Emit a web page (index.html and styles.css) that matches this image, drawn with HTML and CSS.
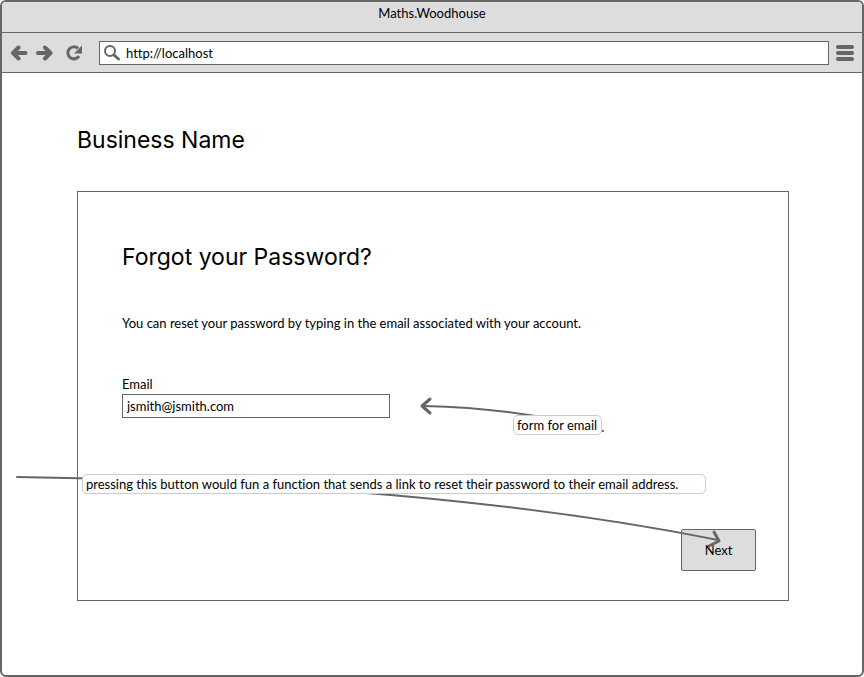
FILE: index.html
```html
<!DOCTYPE html>
<html lang="en">
<head>
<meta charset="utf-8">
<title>Maths.Woodhouse</title>
<link rel="stylesheet" href="styles.css">
</head>
<body>
<div class="window">
  <header class="titlebar">Maths.Woodhouse</header>
  <nav class="toolbar">
    <button class="tool" type="button" aria-label="Back">
      <svg width="18" height="16" viewBox="0 0 18 16"><path class="thick" d="M15.500 8H4M8.500 2.500L3 8l5.500 5.500"/></svg>
    </button>
    <button class="tool" type="button" aria-label="Forward">
      <svg width="18" height="16" viewBox="0 0 18 16"><path class="thick" d="M3 8H15M10 2.500L15.500 8l-5.500 5.500"/></svg>
    </button>
    <button class="tool tool-reload" type="button" aria-label="Reload">
      <svg width="18" height="16" viewBox="0 0 18 16"><path class="ring" d="M13 3.500A6 6 0 1 0 14 11"/><path class="solid" d="M17 .5v8H9z"/></svg>
    </button>
    <label class="address">
      <svg width="18" height="18" viewBox="0 0 18 18" aria-hidden="true"><circle class="lens" cx="6" cy="7" r="5"/><path class="handle" d="M10 11l4.500 4"/></svg>
      <input class="address-input" type="text" value="http://localhost" aria-label="Address">
    </label>
    <button class="tool" type="button" aria-label="Menu">
      <svg width="18" height="16" viewBox="0 0 18 16"><path class="bars" d="M2 2h14M2 8h14M2 14h14"/></svg>
    </button>
  </nav>
  <main class="page">
    <h1 class="brand">Business Name</h1>
    <form class="card">
      <h2 class="heading">Forgot your Password?</h2>
      <p class="intro">You can reset your password by typing in the email associated with your account.</p>
      <label class="label" for="email">Email</label>
      <input class="email" id="email" type="text" value="jsmith@jsmith.com">
      <button class="next" type="button">Next</button>
    </form>
  </main>
  <svg class="arrows" width="800" height="600" viewBox="0 0 800 600" aria-hidden="true">
    <path class="line" d="M603 431Q520 408 424 406"/>
    <path class="head" d="M430 399l-8 7 8 7"/>
    <path class="line" d="M17 477Q432 483 718 540"/>
    <path class="head" d="M714 532l5 9-10 5"/>
  </svg>
  <p class="note note-form">form for email</p>
  <p class="note note-button">pressing this button would fun a function that sends a link to reset their password to their email address.</p>
</div>
</body>
</html>
```
FILE: styles.css
```css
* { box-sizing: border-box; }

body {
  margin: 0;
  background: #fff;
  color: #000;
  font: 13px/20px Lato, sans-serif;
  font-variant-ligatures: none;
}

h1, h2, p { margin: 0; font-weight: 400; }

button, input { font: inherit; color: inherit; }

svg { display: block; fill: none; stroke: #666; }

.window {
  position: relative;
  min-height: 100vh;
  border: 2px solid #666;
  border-radius: 6px;
  overflow: hidden;
}

.titlebar {
  height: 31px;
  padding-top: 1px;
  background: #ddd;
  border-bottom: 1px solid #666;
  text-align: center;
}

.toolbar {
  display: flex;
  align-items: center;
  gap: 7px;
  height: 40px;
  padding: 0 8px;
  background: #ddd;
  border-bottom: 1px solid #666;
}

.tool { padding: 0; border: 0; background: none; }
.tool-reload { margin: 0 9px 0 5px; }

.thick { stroke-width: 4; stroke-linecap: round; stroke-linejoin: round; }
.ring { stroke-width: 3; }
.solid { fill: #666; stroke: none; }
.lens { stroke-width: 2; }
.handle { stroke-width: 3; stroke-linecap: round; }
.bars { stroke-width: 4; stroke-linecap: round; }

.address {
  display: flex;
  flex: 1;
  align-items: center;
  gap: 4px;
  height: 24px;
  padding: 0 4px;
  background: #fff;
  border: 1px solid #666;
}

.address-input {
  flex: 1;
  min-width: 0;
  padding: 0;
  border: 0;
  background: none;
  outline: 0;
}

.page { padding: 51px 73px 74px 75px; }

.brand, .heading { font-family: Inter, sans-serif; font-size: 23px; line-height: 32px; }

.card {
  display: flex;
  flex-direction: column;
  align-items: flex-start;
  margin-top: 35px;
  padding: 49px 32px 29px 44px;
  border: 1px solid #666;
}

.intro { margin-top: 40px; }
.label { margin-top: 41px; }

.email {
  width: 268px;
  max-width: 100%;
  height: 24px;
  padding: 0 4px;
  border: 1px solid #666;
  background: #fff;
}

.next {
  align-self: flex-end;
  width: 75px;
  height: 42px;
  margin-top: 111px;
  padding: 0;
  border: 1px solid #666;
  border-radius: 2px;
  background: #ddd;
}

.arrows {
  position: absolute;
  top: -2px;
  left: -2px;
  pointer-events: none;
}

.line { stroke-width: 2; stroke-linecap: round; }
.head { stroke-width: 3; stroke-linecap: round; stroke-linejoin: round; }

.note {
  position: absolute;
  padding: 0 3px;
  border: 1px solid #ccc;
  border-radius: 5px;
  background: #fff;
  line-height: 18px;
  white-space: nowrap;
}

.note-form { top: 413px; left: 511px; min-width: 89px; }
.note-button { top: 472px; left: 80px; min-width: 624px; }
```
